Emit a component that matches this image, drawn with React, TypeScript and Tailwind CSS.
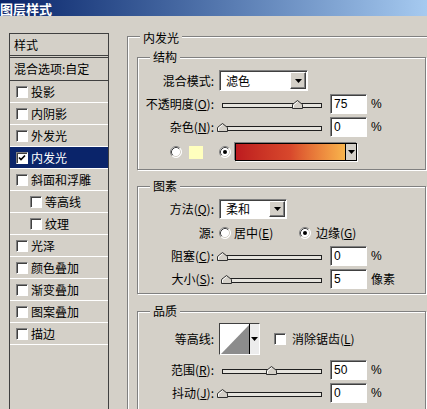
import React from "react";

const Tri = () => (
  <svg width="7" height="4" viewBox="0 0 7 4">
    <polygon points="0,0 7,0 3.5,4" fill="#000" />
  </svg>
);

const Radio = ({ checked }: { checked?: boolean }) => (
  <svg width="12" height="12" viewBox="0 0 12 12" className="shrink-0">
    <circle cx="6" cy="6" r="5.5" fill="#fff" />
    <path d="M 2.11 9.89 A 5.5 5.5 0 0 1 9.89 2.11" stroke="#808080" fill="none" />
    <path d="M 2.82 9.18 A 4.5 4.5 0 0 1 9.18 2.82" stroke="#404040" fill="none" />
    <path d="M 9.89 2.11 A 5.5 5.5 0 0 1 2.11 9.89" stroke="#ffffff" fill="none" />
    <path d="M 9.18 2.82 A 4.5 4.5 0 0 1 2.82 9.18" stroke="#d4d0c8" fill="none" />
    {checked && <circle cx="6" cy="6" r="2" fill="#000" />}
  </svg>
);

const Check = ({ checked }: { checked?: boolean }) => (
  <div className="w-[12px] h-[12px] shrink-0 border border-t-[#808080] border-l-[#808080] border-b-white border-r-white bg-white shadow-[inset_1px_1px_0_#404040] flex items-center justify-center">
    {checked && (
      <svg width="8" height="8" viewBox="0 0 8 8">
        <path d="M1 3.5 L3 5.5 L7 1.5" stroke="#000" strokeWidth="1.6" fill="none" />
      </svg>
    )}
  </div>
);

const Sunken =
  "border border-t-[#808080] border-l-[#808080] border-b-white border-r-white shadow-[inset_1px_1px_0_#404040] bg-white";

const Field = ({ v }: { v: string }) => (
  <div
    className={`w-[37px] h-[20px] shrink-0 ml-[5px] ${Sunken} flex items-center pl-[3px] font-['Liberation_Sans',sans-serif] text-[12px]`}
  >
    {v}
  </div>
);

const Slider = ({ pos }: { pos: number }) => (
  <div className="relative w-[106px] h-[20px] shrink-0">
    <div className="absolute left-[3px] top-[9px] w-[100px] h-[5px] border border-[#202020] bg-[#e6e4de]" />
    <svg
      className="absolute top-[6px]"
      style={{ left: pos - 2 }}
      width="11"
      height="9"
      viewBox="0 0 11 9"
    >
      <polygon points="0.5,8.5 0.5,4.5 5.5,0.5 10.5,4.5 10.5,8.5" fill="#d4d0c8" stroke="#303030" />
      <path d="M1.5 7.5 L1.5 5 L5.5 1.8" stroke="#fff" fill="none" />
    </svg>
  </div>
);

const DropBtn = () => (
  <div className="w-[16px] h-[17px] border border-t-white border-l-white border-b-[#404040] border-r-[#404040] shadow-[inset_-1px_-1px_0_#808080] bg-[#d4d0c8] flex items-center justify-center">
    <Tri />
  </div>
);

const Select = ({ text, w }: { text: string; w: string }) => (
  <div className={`${w} h-[21px] shrink-0 ${Sunken} flex items-center justify-between pl-[6px] pr-[1px]`}>
    <span>{text}</span>
    <DropBtn />
  </div>
);

const Label = ({ children }: { children: React.ReactNode }) => (
  <div className="w-[75px] mr-[5px] text-right shrink-0 whitespace-nowrap">{children}</div>
);

const Group = ({
  label,
  className,
  labelTop,
  children,
}: {
  label: string;
  className: string;
  labelTop: string;
  children?: React.ReactNode;
}) => (
  <div
    className={`relative border border-[#808080] shadow-[inset_1px_1px_0_#fff,1px_1px_0_#fff] ${className}`}
  >
    <span className={`absolute ${labelTop} left-[12px] px-[3px] bg-[#d4d0c8] leading-[12px]`}>{label}</span>
    {children}
  </div>
);

const listItems: { t: string; indent?: boolean; sel?: boolean; checked?: boolean }[] = [
  { t: "投影" },
  { t: "内阴影" },
  { t: "外发光" },
  { t: "内发光", sel: true, checked: true },
  { t: "斜面和浮雕" },
  { t: "等高线", indent: true },
  { t: "纹理", indent: true },
  { t: "光泽" },
  { t: "颜色叠加" },
  { t: "渐变叠加" },
  { t: "图案叠加" },
  { t: "描边" },
];

export default function App() {
  return (
    <div className="w-[427px] h-[409px] overflow-hidden bg-[#d4d0c8] text-black text-[12px] leading-none font-['Noto_Sans_CJK_SC',sans-serif]">
      <div className="h-[16px] bg-gradient-to-r from-[#0a246a] to-[#a6caf0] flex items-center">
        <span className="text-white font-bold text-[13px]">图层样式</span>
      </div>
      <div className="flex">
        {/* left list */}
        <div className="shrink-0 ml-[9px] mt-[17px] w-[100px] h-[380px] border border-[#404040] flex flex-col">
          <div className="h-[24px] border-b-[3px] border-double border-[#404040] flex items-center pl-[4px]">
            样式
          </div>
          <div className="h-[23px] border-b border-[#404040] flex items-center pl-[4px] whitespace-nowrap">
            混合选项:自定
          </div>
          {listItems.map((it) => (
            <div
              key={it.t}
              className={`h-[22px] border-b border-white flex items-center gap-[3px] ${
                it.indent ? "pl-[20px]" : "pl-[6px]"
              } ${it.sel ? "bg-[#0a246a] text-white" : ""}`}
            >
              <Check checked={it.checked} />
              <span>{it.t}</span>
            </div>
          ))}
        </div>

        {/* right */}
        <Group
          label="内发光"
          labelTop="top-[-5px]"
          className="shrink-0 ml-[18px] mt-[20px] w-[310px] h-[400px] pt-[20px] pl-[9px]"
        >
          {/* 结构 */}
          <Group label="结构" labelTop="top-[-7px]" className="w-[289px] pt-[12px] pb-[8px] pl-[1px]">
            <div className="flex items-center h-[21px]">
              <Label>混合模式:</Label>
              <Select text="滤色" w="w-[89px]" />
            </div>
            <div className="flex items-center h-[20px] mt-[3px]">
              <Label>
                不透明度(<u>O</u>):
              </Label>
              <Slider pos={75} />
              <Field v="75" />
              <span className="ml-[4px] font-['Liberation_Sans',sans-serif]">%</span>
            </div>
            <div className="flex items-center h-[20px] mt-[3px]">
              <Label>
                杂色(<u>N</u>):
              </Label>
              <Slider pos={0} />
              <Field v="0" />
              <span className="ml-[4px] font-['Liberation_Sans',sans-serif]">%</span>
            </div>
            <div className="flex items-center h-[18px] mt-[6px]">
              <div className="ml-[31px]">
                <Radio />
              </div>
              <div className="ml-[6px] w-[16px] h-[15px] bg-[#ffffbe] border border-t-[#d4d0c8] border-l-[#d4d0c8] border-b-[#d4d0c8] border-r-[#d4d0c8]" />
              <div className="ml-[15px]">
                <Radio checked />
              </div>
              <div className="ml-[4px] w-[122px] h-[18px] flex border border-black shadow-[-1px_-1px_0_#808080,1px_1px_0_#fff]">
                <div className="flex-1 bg-gradient-to-r from-[#bd1a1f] via-[#d8482c] to-[#f8b44c]" />
                <div className="w-[11px] border-l border-black bg-[#d4d0c8] flex items-center justify-center">
                  <Tri />
                </div>
              </div>
            </div>
          </Group>

          {/* 图素 */}
          <Group label="图素" labelTop="top-[-7px]" className="w-[289px] mt-[16px] pt-[12px] pb-[4px] pl-[1px]">
            <div className="flex items-center h-[20px]">
              <Label>
                方法(<u>Q</u>):
              </Label>
              <div className="h-[20px] flex items-center">
                <div className={`w-[68px] h-[20px] shrink-0 ${Sunken} flex items-center justify-between pl-[6px] pr-[1px]`}>
                  <span>柔和</span>
                  <div className="w-[16px] h-[16px] border border-t-white border-l-white border-b-[#404040] border-r-[#404040] shadow-[inset_-1px_-1px_0_#808080] bg-[#d4d0c8] flex items-center justify-center">
                    <Tri />
                  </div>
                </div>
              </div>
            </div>
            <div className="flex items-center h-[20px] mt-[4px]">
              <Label>源:</Label>
              <Radio />
              <span className="ml-[3px] w-[65px] whitespace-nowrap">
                居中(<u>E</u>)
              </span>
              <Radio checked />
              <span className="ml-[5px] whitespace-nowrap">
                边缘(<u>G</u>)
              </span>
            </div>
            <div className="flex items-center h-[20px] mt-[3px]">
              <Label>
                阻塞(<u>C</u>):
              </Label>
              <Slider pos={0} />
              <Field v="0" />
              <span className="ml-[4px] font-['Liberation_Sans',sans-serif]">%</span>
            </div>
            <div className="flex items-center h-[20px] mt-[3px]">
              <Label>
                大小(<u>S</u>):
              </Label>
              <Slider pos={4} />
              <Field v="5" />
              <span className="ml-[4px]">像素</span>
            </div>
          </Group>

          {/* 品质 */}
          <Group label="品质" labelTop="top-[-7px]" className="w-[289px] h-[130px] mt-[17px] pt-[11px] pl-[1px]">
            <div className="flex items-center h-[32px]">
              <Label>等高线:</Label>
              <div className="flex w-[41px] h-[32px] shrink-0 border border-t-[#404040] border-l-[#404040] border-b-white border-r-white bg-white">
                <svg width="29" height="30" viewBox="0 0 29 30">
                  <polygon points="1,30 29,1 29,30" fill="#8c8c8c" />
                </svg>
                <div className="w-[10px] border-l border-black bg-[#ececec] flex items-center justify-center">
                  <Tri />
                </div>
              </div>
              <div className="ml-[14px]">
                <Check />
              </div>
              <span className="ml-[6px] whitespace-nowrap">
                消除锯齿(<u>L</u>)
              </span>
            </div>
            <div className="flex items-center h-[20px] mt-[5px]">
              <Label>
                范围(<u>R</u>):
              </Label>
              <Slider pos={49} />
              <Field v="50" />
              <span className="ml-[4px] font-['Liberation_Sans',sans-serif]">%</span>
            </div>
            <div className="flex items-center h-[20px] mt-[3px]">
              <Label>
                抖动(<u>J</u>):
              </Label>
              <Slider pos={0} />
              <Field v="0" />
              <span className="ml-[4px] font-['Liberation_Sans',sans-serif]">%</span>
            </div>
          </Group>
        </Group>
      </div>
    </div>
  );
}
